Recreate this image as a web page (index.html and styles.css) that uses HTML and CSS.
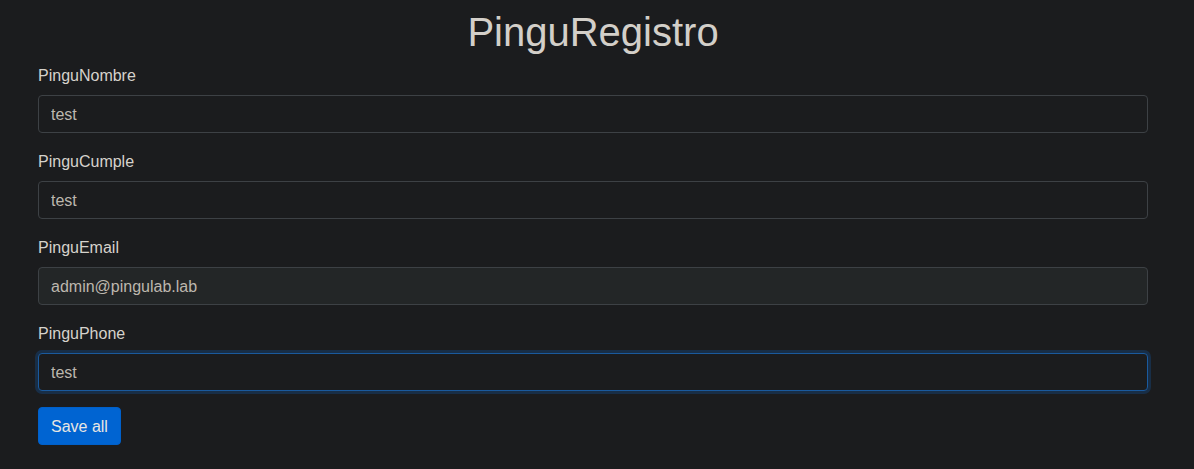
FILE: index.html
```html
<!DOCTYPE html>
<html lang="es">
<head>
<meta charset="utf-8">
<title>PinguRegistro</title>
<link rel="stylesheet" href="styles.css">
</head>
<body>
<main class="container">
  <h1 class="title">PinguRegistro</h1>
  <form class="form">
    <div class="group">
      <label class="label">PinguNombre</label>
      <input class="input" type="text" value="test">
    </div>
    <div class="group">
      <label class="label">PinguCumple</label>
      <input class="input" type="text" value="test">
    </div>
    <div class="group">
      <label class="label">PinguEmail</label>
      <input class="input input-readonly" type="text" value="admin@pingulab.lab" readonly>
    </div>
    <div class="group">
      <label class="label">PinguPhone</label>
      <input class="input input-focus" type="text" value="test">
    </div>
    <button class="btn" type="button">Save all</button>
  </form>
</main>
</body>
</html>
```
FILE: styles.css
```css
html, body {
  margin: 0;
  padding: 0;
  background: #1b1c1e;
}
body {
  font-family: "Liberation Sans", Arial, sans-serif;
  font-size: 16px;
  line-height: 1.5;
  color: #d6d2cc;
}
.container {
  width: 1110px;
  margin: 0 0 0 38px;
}
.title {
  margin: 0 0 7px;
  padding-top: 8px;
  font-size: 40px;
  font-weight: 400;
  line-height: 48px;
  text-align: center;
  color: #d3cfc9;
}
.form {
  display: flex;
  flex-direction: column;
  align-items: flex-start;
}
.group {
  width: 100%;
  margin-bottom: 16px;
}
.label {
  display: block;
  padding-top: 1px;
  margin-bottom: 7px;
  line-height: 24px;
}
.input {
  box-sizing: border-box;
  display: block;
  width: 100%;
  height: 38px;
  padding: 7px 12px 5px;
  font-family: inherit;
  font-size: 16px;
  line-height: 24px;
  color: #bdb7ae;
  background: #1b1c1e;
  border: 1px solid #3d4145;
  border-radius: 4px;
  outline: none;
}
.input-readonly {
  background: #232627;
}
.input-focus {
  border-color: #1a5a9e;
  box-shadow: 0 0 0 3px rgba(20, 80, 150, 0.35);
}
.btn {
  box-sizing: border-box;
  height: 38px;
  padding: 7px 12px 5px;
  font-family: inherit;
  font-size: 16px;
  line-height: 24px;
  color: #e8e6e3;
  background: #0064d2;
  border: 1px solid #0060ca;
  border-radius: 4px;
}
```
